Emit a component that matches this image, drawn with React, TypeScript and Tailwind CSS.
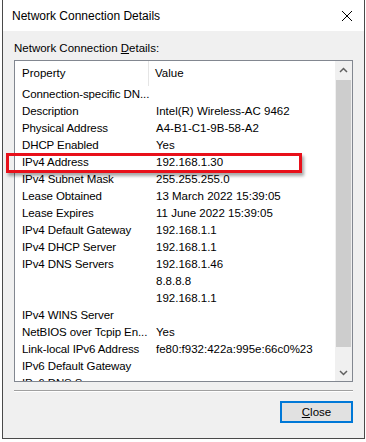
import React from "react";

const rows: [string, string][] = [
  ["Connection-specific DN...", ""],
  ["Description", "Intel(R) Wireless-AC 9462"],
  ["Physical Address", "A4-B1-C1-9B-58-A2"],
  ["DHCP Enabled", "Yes"],
  ["IPv4 Address", "192.168.1.30"],
  ["IPv4 Subnet Mask", "255.255.255.0"],
  ["Lease Obtained", "13 March 2022 15:39:05"],
  ["Lease Expires", "11 June 2022 15:39:05"],
  ["IPv4 Default Gateway", "192.168.1.1"],
  ["IPv4 DHCP Server", "192.168.1.1"],
  ["IPv4 DNS Servers", "192.168.1.46"],
  ["", "8.8.8.8"],
  ["", "192.168.1.1"],
  ["IPv4 WINS Server", ""],
  ["NetBIOS over Tcpip En...", "Yes"],
  ["Link-local IPv6 Address", "fe80:f932:422a:995e:66c0%23"],
  ["IPv6 Default Gateway", ""],
  ["IPv6 DNS Servers", ""],
];

export default function App() {
  return (
    <div
      className="relative w-[366px] h-[442px] bg-white overflow-hidden text-[11.5px] text-black"
      style={{ fontFamily: '"Liberation Sans", Arial, sans-serif' }}
    >
      <div className="ml-[2px] w-[363px] h-[439px] border-x border-b border-[#4a4a4a] flex flex-col">
        {/* Title bar */}
        <div className="h-[31px] bg-white flex items-center justify-between pl-[9px] pr-[11px]">
          <span className="leading-[16px] text-[12px]">Network Connection Details</span>
          <svg width="12" height="12" viewBox="0 0 12 12">
            <path d="M1 1L11 11M11 1L1 11" stroke="#000" strokeWidth="1" />
          </svg>
        </div>
        {/* Body */}
        <div className="flex-1 bg-[#f0f0f0] px-[11px] flex flex-col">
          <div className="pt-[9px] leading-[16px]">
            Network Connection <span className="underline">D</span>etails:
          </div>
          <div className="mt-[4px] h-[322px] border border-[#828790] bg-white flex overflow-hidden">
            <div className="flex-1 flex flex-col overflow-hidden">
              <div className="h-[25px] shrink-0 flex">
                <div className="w-[134px] shrink-0 border-r border-[#e5e5e5] pl-[7px] flex items-center">Property</div>
                <div className="pl-[6px] flex items-center">Value</div>
              </div>
              {rows.map(([p, v], i) => (
                <div key={i} className="h-[17px] shrink-0 flex items-center leading-[17px]">
                  <div className="w-[134px] shrink-0 pl-[7px] whitespace-nowrap tracking-[-0.1px]">{p}</div>
                  <div className="pl-[7px] whitespace-nowrap">{v}</div>
                </div>
              ))}
            </div>
            <div className="w-[17px] shrink-0 bg-[#f0f0f0] flex flex-col">
              <div className="h-[17px] flex items-center justify-center">
                <svg width="9" height="6" viewBox="0 0 9 6">
                  <path d="M1 5L4.5 1.5L8 5" stroke="#606060" strokeWidth="1.5" fill="none" />
                </svg>
              </div>
              <div className="mx-[1px] mt-[2px] h-[267px] bg-[#cdcdcd]" />
              <div className="flex-1 flex items-end justify-center pb-[5px]">
                <svg width="9" height="6" viewBox="0 0 9 6">
                  <path d="M1 1L4.5 4.5L8 1" stroke="#606060" strokeWidth="1.5" fill="none" />
                </svg>
              </div>
            </div>
          </div>
          <div className="mt-[8px] h-[2px] border-t border-[#a0a0a0] border-b border-b-white" />
          <div className="mt-[9px] flex justify-end">
            <button className="w-[73px] h-[22px] border-2 border-[#0078d7] bg-[#e1e1e1] flex items-center justify-center leading-[16px]">
              <span>
                <span className="underline">C</span>lose
              </span>
            </button>
          </div>
        </div>
      </div>
      {/* Red highlight box */}
      <div className="absolute left-[6px] top-[153px] w-[296px] h-[20px] border-[3px] border-[#e8101a] shadow-[2px_3px_3px_rgba(0,0,0,0.35)]" />
    </div>
  );
}
